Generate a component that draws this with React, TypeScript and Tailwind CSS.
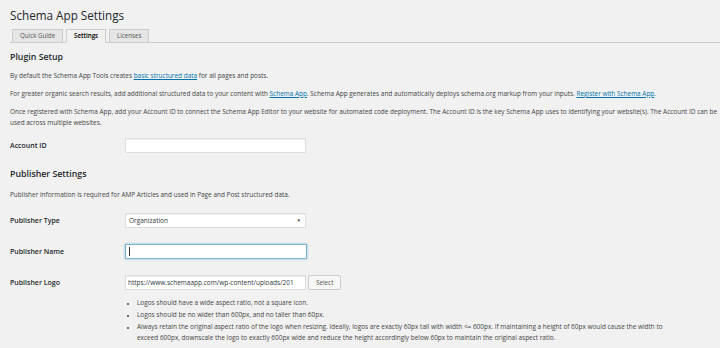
const tabs = [
    { label: "Quick Guide", active: false },
    { label: "Settings", active: true },
    { label: "Licenses", active: false },
];

const logoNotes = [
    "Logos should have a wide aspect ratio, not a square icon.",
    "Logos should be no wider than 600px, and no taller than 60px.",
    "Always retain the original aspect ratio of the logo when resizing. Ideally, logos are exactly 60px tall with width <= 600px. If maintaining a height of 60px would cause the width to exceed 600px, downscale the logo to exactly 600px wide and reduce the height accordingly below 60px to maintain the original aspect ratio.",
];

const Link = ({ children }: { children: React.ReactNode }) => (
    <a href="#" className="text-[#0073aa] underline">
        {children}
    </a>
);

const Row = ({ label, children, className = "" }: { label: string; children: React.ReactNode; className?: string }) => (
    <div className={`flex items-start ${className}`}>
        <div className="w-[115px] shrink-0 pt-[3px] text-[7px] leading-[10px] font-semibold text-[#23282d]">{label}</div>
        <div className="flex-1">{children}</div>
    </div>
);

const inputClass = "h-[15px] w-[181px] border border-[#ddd] bg-white shadow-[inset_0_1px_1px_rgba(0,0,0,0.07)]";

export default function App() {
    return (
        <div
            className="h-[348px] w-[720px] overflow-hidden bg-[#f1f1f1] text-[#444]"
            style={{ fontFamily: '"Open Sans", "Noto Sans", sans-serif' }}
        >
            <div className="pl-[10px] pt-[6px]">
                <h1 className="text-[11.7px] leading-[18px] text-[#23282d]">Schema App Settings</h1>

                <nav className="mt-[5px] flex h-[14px] items-end gap-[3px] border-b border-[#ccc] pl-[2px]">
                    {tabs.map((tab) => (
                        <div
                            key={tab.label}
                            className={`-mb-px flex h-[14px] items-center border border-[#ccc] px-[7px] text-[6.2px] ${
                                tab.active
                                    ? "border-b-[#f1f1f1] bg-[#f1f1f1] font-semibold text-[#000]"
                                    : "bg-[#e5e5e5] text-[#555]"
                            }`}
                        >
                            {tab.label}
                        </div>
                    ))}
                </nav>

                <h2 className="mt-[8px] text-[8.8px] font-semibold leading-[13px] text-[#23282d]">Plugin Setup</h2>
                <div className="mt-[6px] flex flex-col gap-[7px] text-[6.45px] leading-[11px]">
                    <p>
                        By default the Schema App Tools creates <Link>basic structured data</Link> for all pages and posts.
                    </p>
                    <p>
                        For greater organic search results, add additional structured data to your content with{" "}
                        <Link>Schema App</Link>. Schema App generates and automatically deploys schema.org markup from your
                        inputs. <Link>Register with Schema App</Link>.
                    </p>
                    <p className="w-[715px]">
                        Once registered with Schema App, add your Account ID to connect the Schema App Editor to your website for
                        automated code deployment. The Account ID is the key Schema App uses to identifying your website(s). The
                        Account ID can be used across multiple websites.
                    </p>
                </div>

                <Row label="Account ID" className="mt-[10px]">
                    <div className={inputClass} />
                </Row>

                <h2 className="mt-[15px] text-[8.8px] font-semibold leading-[13px] text-[#23282d]">Publisher Settings</h2>
                <p className="mt-[8px] text-[6.45px] leading-[11px]">
                    Publisher information is required for AMP Articles and used in Page and Post structured data.
                </p>

                <Row label="Publisher Type" className="mt-[13px]">
                    <div className={`${inputClass} flex items-center justify-between pl-[3px] pr-[4px] text-[6.5px] text-[#32373c]`}>
                        <span>Organization</span>
                        <span className="text-[4.5px]">▼</span>
                    </div>
                </Row>

                <Row label="Publisher Name" className="mt-[16px]">
                    <div className="flex h-[15px] w-[182px] items-center border border-[#7eb4d0] bg-white pl-[3px] shadow-[0_0_2px_rgba(30,140,190,0.6)]">
                        <span className="h-[9px] w-px bg-[#333]" />
                    </div>
                </Row>

                <Row label="Publisher Logo" className="mt-[16px]">
                    <div className="flex items-center gap-[2px]">
                        <div className={`${inputClass} flex items-center overflow-hidden whitespace-nowrap pl-[2px] text-[6.5px] text-[#32373c]`}>
                            https://www.schemaapp.com/wp-content/uploads/201
                        </div>
                        <button className="h-[15px] rounded-[2px] border border-[#ccc] bg-[#f7f7f7] px-[7px] text-[6.3px] text-[#555]">
                            Select
                        </button>
                    </div>
                    <ul className="mt-[7px] w-[545px] list-disc pl-[12px] text-[6.45px] leading-[11px] marker:text-[5px]">
                        {logoNotes.map((note) => (
                            <li key={note} className="mb-[1px]">
                                {note}
                            </li>
                        ))}
                    </ul>
                </Row>
            </div>
        </div>
    );
}
